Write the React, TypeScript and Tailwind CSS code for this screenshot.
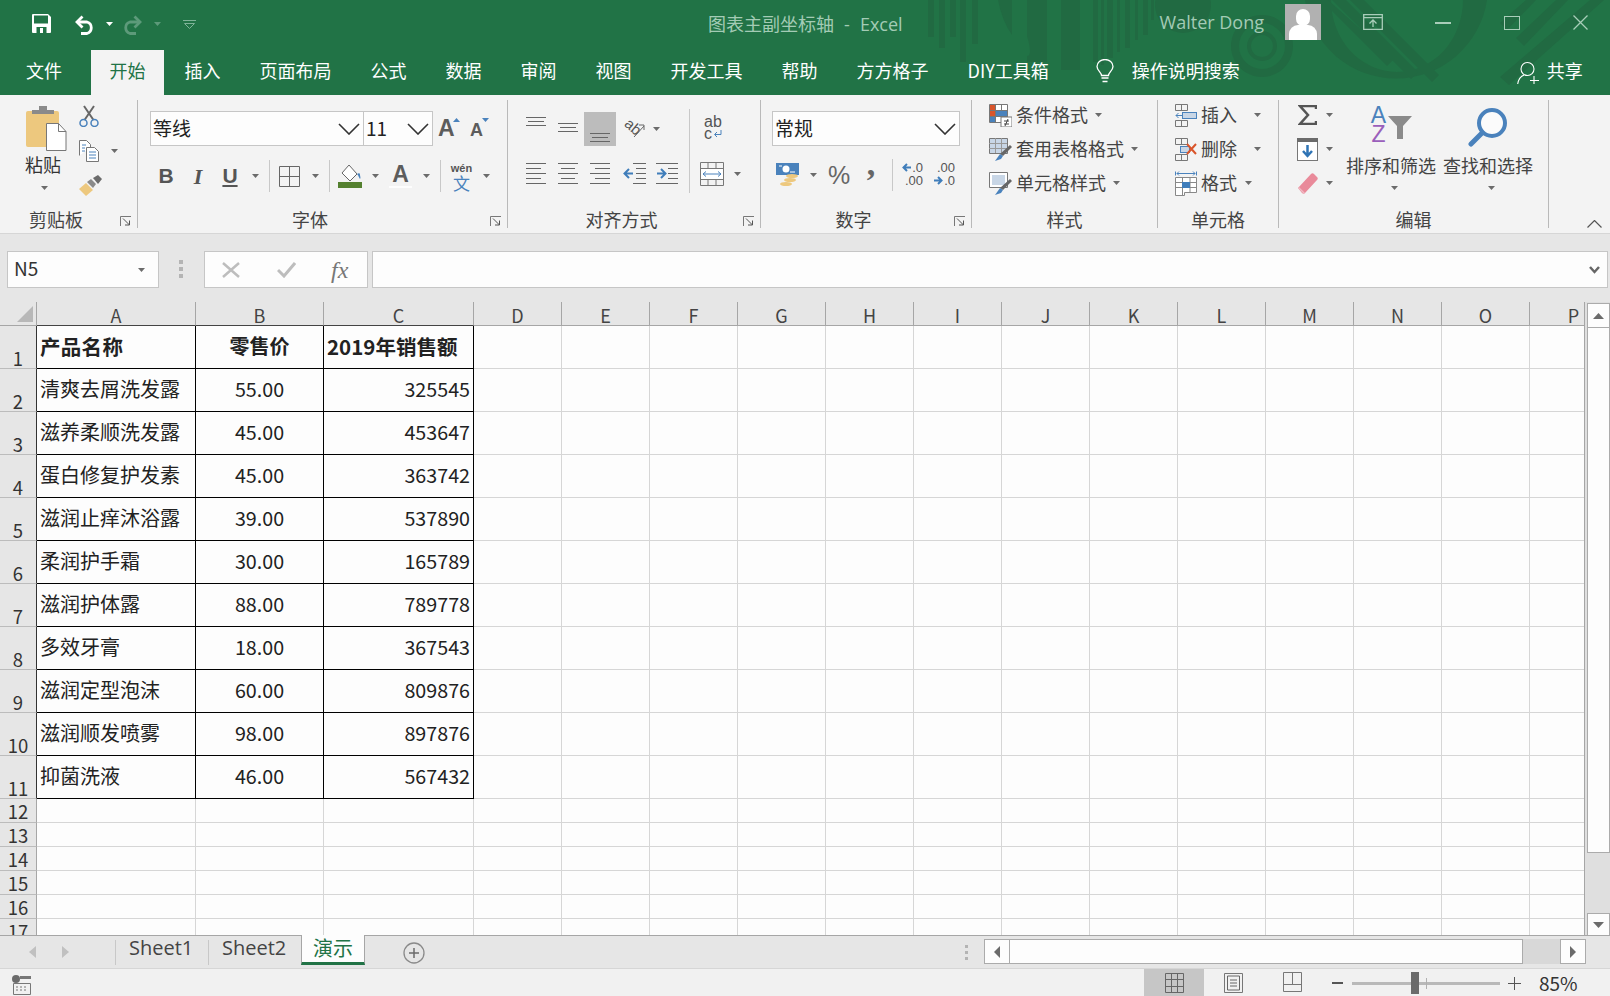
import React from "react";

const GREEN = "#217346";

const tabs = ["插入", "页面布局", "公式", "数据", "审阅", "视图", "开发工具", "帮助", "方方格子", "DIY工具箱"];
const letters = ["D", "E", "F", "G", "H", "I", "J", "K", "L", "M", "N", "O", "P"];
const rows = [
  ["清爽去屑洗发露", "55.00", "325545"],
  ["滋养柔顺洗发露", "45.00", "453647"],
  ["蛋白修复护发素", "45.00", "363742"],
  ["滋润止痒沐浴露", "39.00", "537890"],
  ["柔润护手霜", "30.00", "165789"],
  ["滋润护体露", "88.00", "789778"],
  ["多效牙膏", "18.00", "367543"],
  ["滋润定型泡沫", "60.00", "809876"],
  ["滋润顺发喷雾", "98.00", "897876"],
  ["抑菌洗液", "46.00", "567432"],
];

const Arrow = ({ className = "" }: { className?: string }) => (
  <svg width="7" height="4" viewBox="0 0 7 4" className={`shrink-0 ${className}`}>
    <path d="M0 0h7L3.5 4z" fill="#6b6b6b" />
  </svg>
);

const Chevron = ({ className = "" }: { className?: string }) => (
  <svg width="22" height="12" viewBox="0 0 22 12" className={`shrink-0 ${className}`}>
    <path d="M1 1l10 10L21 1" fill="none" stroke="#333" strokeWidth="1.6" />
  </svg>
);

const Sep = ({ className = "" }: { className?: string }) => <div className={`w-px bg-[#c8c8c8] shrink-0 ${className}`} />;

const Launcher = () => (
  <svg width="12" height="11" viewBox="0 0 12 11" className="absolute right-[5px] top-[6px]">
    <path d="M.5 10V.5H11" fill="none" stroke="#777" />
    <path d="M3 2.5l6.5 6.5M9.5 4.5V9H5" fill="none" stroke="#555" />
  </svg>
);

function Group({ className, label, launcher, children }: { className: string; label: string; launcher?: boolean; children: React.ReactNode }) {
  return (
    <div className={`${className} h-[128px] mt-[5px] shrink-0 border-r border-[#b9b9b9] flex flex-col`}>
      <div className="h-[112px]">{children}</div>
      <div className={`relative h-[18px] leading-[18px] text-center text-[18px] text-[#444] ${launcher ? "pr-[25px]" : ""}`}>
        {label}
        {launcher && <Launcher />}
      </div>
    </div>
  );
}

const Combo = ({ className, text }: { className: string; text: string }) => (
  <div className={`${className} h-[35px] shrink-0 bg-[#fdfdfd] border border-[#c6c6c6] flex items-center justify-between pl-[2px] pr-[3px] text-[19px] text-[#222]`}>
    <span>{text}</span>
    <Chevron />
  </div>
);

const Lines = ({ d, w = 20, h = 9, className = "" }: { d: string; w?: number; h?: number; className?: string }) => (
  <svg width={w} height={h} viewBox={`0 0 ${w} ${h}`} className={`shrink-0 ${className}`}>
    <path d={d} fill="none" stroke="#666" />
  </svg>
);

function TitleArt() {
  return (
    <svg width="1610" height="95" viewBox="0 0 1610 95" className="absolute left-0 top-0 pointer-events-none" aria-hidden>
      <defs>
        <clipPath id="ring">
          <circle cx="1397" cy="2" r="92" />
        </clipPath>
      </defs>
      <g fill="#216a42">
        <rect x="928" width="6" height="37" />
        <rect x="939" width="6" height="48" />
        <rect x="950" width="6" height="37" />
        <rect x="960" width="6" height="62" />
        <rect x="972" width="6" height="44" />
        <path d="M998 0h14v35q-10-14-14-35z" />
        <path d="M1027 0h20v62h-20v-6q6 0 0-20z" />
        <rect x="1061" width="19" height="70" />
        <rect x="1093" width="5" height="62" />
        <rect x="1101" width="3" height="65" />
        <rect x="1107" width="6" height="58" />
        <rect x="1117" width="3" height="52" />
        <rect x="1125" width="5" height="48" />
        <rect x="1135" width="3" height="40" />
        <rect x="1143" width="5" height="35" />
        <rect x="1151" width="3" height="20" />
        <circle cx="1183" cy="5" r="28" />
        <path fillRule="evenodd" d="M1262 15a31 31 0 1 0 .01 0zM1262 35a11 11 0 1 1-.01 0z" />
        <path fillRule="evenodd" d="M1305 0h182a92 92 0 0 1-182 0zM1331 0a66 72 0 0 0 132 0z" />
        <g clipPath="url(#ring)">
          <path d="M1321 0l66 66 7 -7L1328 0zM1332 0l79 79 7-7L1346 0zM1350 0l82 82 7-7L1364 0z" />
        </g>
        <path d="M1526 0h10l-29 30 -7-7zM1556 0h12l-44 46-8-8zM1590 0h14l-95 85-9-8z" />
      </g>
      <circle cx="1262" cy="46" r="19" fill="none" stroke={GREEN} strokeWidth="8" />
    </svg>
  );
}

function TitleBar() {
  return (
    <div className="relative h-[50px] flex items-start shrink-0">
      <svg width="19" height="19" viewBox="0 0 19 19" className="ml-[32px] mt-[14px] shrink-0">
        <path fill="#fff" d="M1 0h15l3 3v15a1 1 0 0 1-1 1H1a1 1 0 0 1-1-1V1a1 1 0 0 1 1-1z" />
        <rect x="2" y="1.500" width="14" height="8" fill={GREEN} />
        <rect x="4.500" y="13" width="10" height="6" fill={GREEN} />
        <rect x="8" y="14" width="3" height="5" fill="#fff" />
      </svg>
      <svg width="21" height="20" viewBox="0 0 21 20" className="ml-[23px] mt-[15px] shrink-0">
        <path d="M3 7h10a6 6 0 0 1 0 11.500H7" fill="none" stroke="#fff" strokeWidth="2.800" />
        <path d="M8.500 1.500L3 7l5.500 5.500" fill="none" stroke="#fff" strokeWidth="2.800" />
      </svg>
      <svg width="7" height="4" viewBox="0 0 7 4" className="ml-[11px] mt-[22px] shrink-0">
        <path d="M0 0h7L3.500 4z" fill="#fff" />
      </svg>
      <svg width="21" height="20" viewBox="0 0 21 20" className="ml-[9px] mt-[15px] shrink-0">
        <path d="M18 7H8a6 6 0 0 0 0 11.500h6" fill="none" stroke="#5d9a7a" strokeWidth="2.800" />
        <path d="M12.500 1.500L18 7l-5.500 5.500" fill="none" stroke="#5d9a7a" strokeWidth="2.800" />
      </svg>
      <svg width="7" height="4" viewBox="0 0 7 4" className="ml-[11px] mt-[22px] shrink-0">
        <path d="M0 0h7L3.500 4z" fill="#5d9a7a" />
      </svg>
      <svg width="13" height="9" viewBox="0 0 13 9" className="ml-[22px] mt-[20px] shrink-0">
        <path d="M0 .5h13M1.500 3.500h10L6.500 8.500z" fill="none" stroke="#7fb398" />
      </svg>
      <div className="relative ml-[512px] mt-[10px] leading-[27px] text-[18px] text-[#a3cbb5] whitespace-nowrap">
        图表主副坐标轴 <span className="font-['Open_Sans',sans-serif] ml-[6px] mr-[6px]">-</span> <span className="font-['Open_Sans',sans-serif]">Excel</span>
      </div>
      <div className="relative ml-[257px] mt-[9px] leading-[27px] text-[18px] text-[#a3cbb5] font-['Open_Sans',sans-serif] whitespace-nowrap w-[125px]">Walter Dong</div>
      <div className="relative w-[36px] h-[36px] mt-[4px] bg-[#b1b1b1] shrink-0 overflow-hidden">
        <div className="absolute left-[11px] top-[5px] w-[14px] h-[17px] rounded-full bg-white" />
        <div className="absolute left-[4px] top-[21px] w-[28px] h-[16px] rounded-t-[9px] bg-white" />
      </div>
      <svg width="20" height="16" viewBox="0 0 20 16" className="relative ml-[42px] mt-[14px] shrink-0">
        <path d="M.7 3.500V15.300h18.600V3.500M.7.7h18.600v3H.7z" fill="none" stroke="#a9cdb9" strokeWidth="1.300" />
        <path d="M10 13V6.500M6.500 9.500l3.500-3.500 3.500 3.500" fill="none" stroke="#a9cdb9" strokeWidth="1.300" />
      </svg>
      <div className="relative ml-[52px] mt-[22px] w-[16px] h-[1.500px] bg-[#a9cdb9] shrink-0" />
      <div className="relative ml-[53px] mt-[16px] w-[16px] h-[14px] border-[1.500px] border-[#a9cdb9] shrink-0" />
      <svg width="15" height="15" viewBox="0 0 15 15" className="relative ml-[53px] mt-[15px] shrink-0">
        <path d="M.5.500l14 14M14.500.500l-14 14" fill="none" stroke="#a9cdb9" strokeWidth="1.300" />
      </svg>
    </div>
  );
}

function TabBar() {
  return (
    <div className="relative h-[45px] flex shrink-0 text-[18px] leading-[41px] text-white">
      <div className="w-[89px] pl-[26px] pr-[27px] shrink-0">文件</div>
      <div className="w-[73px] ml-[2px] text-center bg-[#f3f3f3] text-[#217346] shrink-0">开始</div>
      {tabs.map((t) => (
        <div key={t} className="ml-[2px] px-[18.500px] shrink-0 whitespace-nowrap">
          {t}
        </div>
      ))}
      <svg width="18" height="24" viewBox="0 0 18 24" className="ml-[28.500px] mt-[9px] shrink-0">
        <path d="M5.500 16.500c0-3-4.500-5-4.500-9a8 7 0 0 1 16 0c0 4-4.500 6-4.500 9z" fill="none" stroke="#fff" strokeWidth="1.300" />
        <path d="M5.500 19h7M6.500 22.500h5" fill="none" stroke="#fff" strokeWidth="1.500" />
      </svg>
      <div className="ml-[18px] w-[108px] shrink-0 whitespace-nowrap">操作说明搜索</div>
      <svg width="23" height="24" viewBox="0 0 23 24" className="ml-[277px] mt-[11px] shrink-0">
        <circle cx="10.500" cy="8" r="6.500" fill="none" stroke="#fff" strokeWidth="1.100" />
        <path d="M.7 23c.8-5 3.500-8 6.500-9M15.500 16h0M17 15v8M13 19.500h9" fill="none" stroke="#fff" strokeWidth="1.100" />
      </svg>
      <div className="ml-[7px] shrink-0">共享</div>
    </div>
  );
}

function Clipboard() {
  return (
    <div className="flex">
      <div className="ml-[26px] mt-[6px] w-[42px] flex flex-col items-start">
        <svg width="42" height="45" viewBox="0 0 42 45" className="shrink-0">
          <rect x="0" y="5" width="33" height="36" rx="2" fill="#edc87e" />
          <path d="M6 8V4h7V0h8v4h7v4z" fill="#8a8a8a" />
          <path d="M20.500 17.500h12l7.500 8v19h-19.500z" fill="#fff" stroke="#777" />
          <path d="M32.500 17.500v8h7.500" fill="none" stroke="#777" />
        </svg>
        <div className="-ml-px mt-[2px] h-[22px] leading-[22px] text-[18px] whitespace-nowrap text-[#333]">粘贴</div>
        <Arrow className="ml-[15px] mt-[11px]" />
      </div>
      <div className="ml-[11px] mt-[5px] flex flex-col">
        <svg width="20" height="22" viewBox="0 0 20 22" className="shrink-0">
          <path d="M5 1l9.500 14M15 1L5.500 15" fill="none" stroke="#666" strokeWidth="2" />
          <circle cx="4.500" cy="18" r="3.500" fill="none" stroke="#4a82bc" strokeWidth="1.500" />
          <circle cx="15.500" cy="18" r="3.500" fill="none" stroke="#4a82bc" strokeWidth="1.500" />
        </svg>
        <div className="flex items-center mt-[13px]">
          <svg width="20" height="22" viewBox="0 0 20 22" className="shrink-0">
            <path d="M.5 15.500V.5h7l4 4v3" fill="#fff" stroke="#777" />
            <path d="M7.500 21.500V7.500h8l4 4v10z" fill="#fff" stroke="#777" />
            <path d="M3 5h4M3 8h3M3 11h3M10 12h7M10 15h7M10 18h7" stroke="#4a82bc" />
          </svg>
          <Arrow className="ml-[12px]" />
        </div>
        <svg width="23" height="21" viewBox="0 0 23 21" className="mt-[13px] shrink-0">
          <path d="M0 14l7-6 7 7-7 6z" fill="#edc87e" />
          <path d="M8 7l4-3 5 5-3 4z" fill="#8a8a8a" />
          <path d="M14 3l5-3 4 4-4 5z" fill="#6b6b6b" />
        </svg>
      </div>
    </div>
  );
}

function FontGroup() {
  return (
    <div className="pl-[12px] pt-[11px]">
      <div className="flex items-start">
        <Combo className="w-[214px]" text="等线" />
        <Combo className="w-[70px] -ml-px" text="11" />
        <div className="relative ml-[5px] w-[20px] h-[35px] text-[23px] leading-[30px] mt-[2px] font-['Liberation_Sans',sans-serif] font-bold text-[#5c5c5c]">
          A
          <svg width="7" height="4" viewBox="0 0 7 4" className="absolute left-[15px] top-[5px]">
            <path d="M0 4h7L3.500 0z" fill="#4a82bc" />
          </svg>
        </div>
        <div className="relative ml-[12px] w-[16px] h-[35px] text-[18px] leading-[34px] mt-[2px] font-['Liberation_Sans',sans-serif] font-bold text-[#5c5c5c]">
          A
          <svg width="7" height="4" viewBox="0 0 7 4" className="absolute left-[12px] top-[5px]">
            <path d="M0 0h7L3.500 4z" fill="#4a82bc" />
          </svg>
        </div>
      </div>
      <div className="mt-[14px] h-[28px] flex items-center font-['Liberation_Sans',sans-serif] text-[#555]">
        <span className="ml-[8px] w-[16px] text-center text-[21px] font-bold">B</span>
        <span className="ml-[16px] w-[16px] text-center text-[22px] font-bold italic font-['Liberation_Serif',serif]">I</span>
        <span className="ml-[15px] w-[18px] text-center text-[21px] font-bold underline underline-offset-2">U</span>
        <Arrow className="ml-[13px]" />
        <Sep className="ml-[10px] h-[32px]" />
        <svg width="21" height="21" viewBox="0 0 21 21" className="ml-[9px] shrink-0">
          <path d="M.5.500h20v20H.5zM10.500 0v21M0 10.500h21" fill="none" stroke="#666" />
        </svg>
        <Arrow className="ml-[12px]" />
        <Sep className="ml-[10px] h-[32px]" />
        <svg width="24" height="24" viewBox="0 0 24 24" className="ml-[8px] shrink-0">
          <path d="M11 1l8 9-7 7-8-8z" fill="#fff" stroke="#666" />
          <path d="M19 10c2-1 3-1 3 1 0 1 1 3 0 4-1-1-1-3-3-5z" fill="#4a82bc" />
          <rect x="0" y="18" width="24" height="6" fill="#54802f" />
        </svg>
        <Arrow className="ml-[10px]" />
        <div className="ml-[10px] w-[23px] h-[24px] flex flex-col items-center">
          <span className="text-[23px] leading-[20px] font-bold text-[#5c5c5c]">A</span>
          <div className="mt-[2px] w-[23px] h-[4px] bg-[#fdfdfd]" />
        </div>
        <Arrow className="ml-[11px]" />
        <Sep className="ml-[10px] h-[32px]" />
        <div className="ml-[10px] w-[21px] flex flex-col items-center">
          <span className="text-[11px] leading-[11px] font-bold text-[#555]">wén</span>
          <span className="text-[17px] leading-[15px] mt-[1px] text-[#4a82bc] font-['Noto_Sans_CJK_SC',sans-serif]">文</span>
        </div>
        <Arrow className="ml-[11px]" />
      </div>
    </div>
  );
}

function AlignGroup() {
  return (
    <div className="flex">
      <div className="w-[181px] pt-[12px]">
        <div className="h-[34px] flex">
          <Lines className="ml-[18px] mt-[5px]" d="M0 .5h20M2 4.500h16M0 8.500h20" />
          <Lines className="ml-[12px] mt-[11px]" d="M0 .5h20M2 4.500h16M0 8.500h20" />
          <div className="ml-[6px] w-[32px] h-[34px] bg-[#bcbcbc] flex items-end justify-center pb-[4px] shrink-0">
            <Lines d="M0 .5h20M2 4.500h16M0 8.500h20" />
          </div>
          <div className="ml-[9px] mt-[8px] w-[20px] h-[17px] relative text-[15px] leading-[17px] text-[#555] font-['Liberation_Sans',sans-serif]">
            <span className="absolute left-0 top-[-2px] rotate-[40deg]">ab</span>
            <svg width="20" height="17" viewBox="0 0 20 17" className="absolute left-0 top-0">
              <path d="M9 17L19 6M14 5h5v5" fill="none" stroke="#666" />
            </svg>
          </div>
          <Arrow className="ml-[8px] mt-[15px]" />
        </div>
        <div className="mt-[16px] flex items-start">
          <Lines className="ml-[18px]" h={22} d="M0 1.500h20M0 6.500h15M0 11.500h20M0 16.500h15M0 21.500h20" />
          <Lines className="ml-[12px]" h={22} d="M0 1.500h20M3 6.500h14M0 11.500h20M3 16.500h14M0 21.500h20" />
          <Lines className="ml-[12px]" h={22} d="M0 1.500h20M5 6.500h15M0 11.500h20M5 16.500h15M0 21.500h20" />
          <svg width="23" height="22" viewBox="0 0 23 22" className="ml-[13px] shrink-0">
            <path d="M10 1.500h13M13 6.500h10M13 11.500h10M13 16.500h10M10 21.500h13" stroke="#666" fill="none" />
            <path d="M10 11.500H2M6 7l-4.500 4.500L6 16" stroke="#3f7dba" strokeWidth="2" fill="none" />
          </svg>
          <svg width="22" height="22" viewBox="0 0 22 22" className="ml-[10px] shrink-0">
            <path d="M0 1.500h22M12 6.500h10M12 11.500h10M12 16.500h10M0 21.500h22" stroke="#666" fill="none" />
            <path d="M1 11.500h8M5 7l4.500 4.500L5 16" stroke="#3f7dba" strokeWidth="2" fill="none" />
          </svg>
        </div>
      </div>
      <Sep className="mt-[9px] h-[84px]" />
      <div className="pt-[16px]">
        <div className="ml-[14px] w-[20px] flex flex-col text-[#555] font-['Liberation_Sans',sans-serif] text-[16px] leading-[12px]">
          <span>ab</span>
          <span className="flex items-center">
            c
            <svg width="9" height="8" viewBox="0 0 9 8" className="ml-[1px]">
              <path d="M8 0v4.500H2M4 2L1.500 4.500 4 7" fill="none" stroke="#4a82bc" />
            </svg>
          </span>
        </div>
        <div className="ml-[10px] mt-[22px] flex items-center">
          <svg width="24" height="24" viewBox="0 0 24 24" className="shrink-0">
            <path d="M.5.500h23v23H.5zM0 6.500h24M0 17.500h24M8 0v6.500M16 0v6.500M8 17.500V24M16 17.500V24" fill="none" stroke="#777" />
            <rect x="1" y="7" width="22" height="10" fill="#fff" />
            <path d="M3 12h18M6 9.500L3 12l3 2.500M18 9.500l3 2.500-3 2.500" fill="none" stroke="#4a82bc" />
          </svg>
          <Arrow className="ml-[10px]" />
        </div>
      </div>
    </div>
  );
}

function NumberGroup() {
  return (
    <div className="pl-[11px] pt-[11px]">
      <Combo className="w-[188px]" text="常规" />
      <div className="mt-[16px] flex items-center h-[26px] font-['Liberation_Sans',sans-serif] text-[#555]">
        <svg width="23" height="24" viewBox="0 0 23 24" className="ml-[4px] shrink-0">
          <rect x="0" y="0" width="23" height="12" fill="#4a82bc" />
          <circle cx="10" cy="6" r="3.500" fill="#fff" />
          <path d="M3 3h3M14 9h5" stroke="#fff" />
          <ellipse cx="16" cy="13" rx="6" ry="2" fill="#edc87e" />
          <ellipse cx="14" cy="17" rx="6" ry="2" fill="#edc87e" />
          <ellipse cx="10" cy="21" rx="6" ry="2" fill="#edc87e" />
        </svg>
        <Arrow className="ml-[11px]" />
        <span className="ml-[11px] w-[22px] text-center text-[25px] leading-[26px] text-[#666]">%</span>
        <span className="ml-[16px] w-[10px] text-center text-[34px] leading-[24px] font-bold font-['Liberation_Serif',serif] text-[#666] -mt-[22px]">,</span>
        <Sep className="ml-[16px] h-[32px]" />
        <div className="ml-[8px] w-[22px] flex flex-col items-end text-[13px] leading-[13px] -mt-[2px]">
          <span className="flex items-center">
            <svg width="9" height="9" viewBox="0 0 9 9" className="mr-[1px]">
              <path d="M9 4.500H2M5 1L1.500 4.500 5 8" fill="none" stroke="#3f7dba" strokeWidth="2" />
            </svg>
            .0
          </span>
          <span>.00</span>
        </div>
        <div className="ml-[10px] w-[22px] flex flex-col items-end text-[13px] leading-[13px] -mt-[2px]">
          <span>.00</span>
          <span className="flex items-center">
            <svg width="9" height="9" viewBox="0 0 9 9" className="mr-[1px]">
              <path d="M0 4.500h7M4 1l3.500 3.500L4 8" fill="none" stroke="#3f7dba" strokeWidth="2" />
            </svg>
            .0
          </span>
        </div>
      </div>
    </div>
  );
}

const StyleRow = ({ icon, text, arrow }: { icon: React.ReactNode; text: string; arrow: string }) => (
  <div className="h-[30px] flex items-center text-[18px] text-[#444] whitespace-nowrap">
    {icon}
    <span className="ml-[4px] -mt-[2px]">{text}</span>
    <Arrow className={arrow} />
  </div>
);

function StylesGroup() {
  return (
    <div className="pl-[17px] flex flex-col gap-[4px]">
      <StyleRow
        arrow="ml-[7px]"
        text="条件格式"
        icon={
          <svg width="23" height="23" viewBox="0 0 23 23" className="shrink-0">
            <path d="M.5.500h18v18H.5zM0 6.500h18M0 12.500h18M6.500 0v18M12.500 0v18" fill="#fff" stroke="#777" />
            <rect x="1" y="1" width="5" height="5" fill="#d9552b" />
            <rect x="1" y="7" width="5" height="5" fill="#d9552b" />
            <rect x="7" y="7" width="11" height="5" fill="#4a82bc" />
            <rect x="1" y="13" width="5" height="5" fill="#4a82bc" />
            <rect x="12" y="13" width="11" height="10" fill="#fff" stroke="#777" />
            <path d="M15 17h5M15 20h5M19 15l-3 7" stroke="#444" />
          </svg>
        }
      />
      <StyleRow
        arrow="ml-[7px]"
        text="套用表格格式"
        icon={
          <svg width="23" height="23" viewBox="0 0 23 23" className="shrink-0">
            <path d="M.5.500h18v15H.5z" fill="#c8d6e6" stroke="#777" />
            <path d="M0 5.500h18M0 10.500h18M6.500 0v15M12.500 0v15" stroke="#999" />
            <path d="M21 7l2 2-9 9-3-2z" fill="#666" />
            <path d="M11 16l3 2-2 3-6 2z" fill="#4a82bc" />
          </svg>
        }
      />
      <StyleRow
        arrow="ml-[7px]"
        text="单元格样式"
        icon={
          <svg width="23" height="23" viewBox="0 0 23 23" className="shrink-0">
            <path d="M.5.500h18v15H.5z" fill="#fff" stroke="#777" />
            <rect x="3" y="3" width="13" height="10" fill="#c8d6e6" />
            <path d="M21 7l2 2-9 9-3-2z" fill="#666" />
            <path d="M11 16l3 2-2 3-6 2z" fill="#4a82bc" />
          </svg>
        }
      />
    </div>
  );
}

const CellRow = ({ icon, text, arrow }: { icon: React.ReactNode; text: string; arrow: string }) => (
  <div className="h-[30px] flex items-center text-[18px] text-[#444] whitespace-nowrap">
    {icon}
    <span className="ml-[4px] -mt-[2px]">{text}</span>
    <Arrow className={arrow} />
  </div>
);

function CellsGroup() {
  return (
    <div className="pl-[17px] flex flex-col gap-[4px]">
      <CellRow
        arrow="ml-[17px]"
        text="插入"
        icon={
          <svg width="22" height="23" viewBox="0 0 22 23" className="shrink-0">
            <path d="M.5.500h12v6H.5zM.5 16.500h12v6H.5zM6.500 16v7M6.500 0v6" fill="none" stroke="#777" />
            <rect x="7.500" y="8.500" width="14" height="6" fill="#c8d6e6" stroke="#4a82bc" />
            <path d="M7 11.500H1M3.500 9L1 11.500 3.500 14" fill="none" stroke="#4a82bc" />
          </svg>
        }
      />
      <CellRow
        arrow="ml-[17px]"
        text="删除"
        icon={
          <svg width="22" height="23" viewBox="0 0 22 23" className="shrink-0">
            <path d="M.5.500h12v6H.5zM.5 16.500h12v6H.5zM6.500 16v7M6.500 0v6" fill="none" stroke="#777" />
            <rect x="5.500" y="8.500" width="9" height="6" fill="#c8d6e6" stroke="#4a82bc" />
            <path d="M12 6l9 10M21 6l-9 10" stroke="#d9552b" strokeWidth="2" />
          </svg>
        }
      />
      <CellRow
        arrow="ml-[8px]"
        text="格式"
        icon={
          <svg width="22" height="25" viewBox="0 0 22 25" className="shrink-0">
            <path d="M.5.500v4M21.500.500v4M2 2.500h18M2 2.500l2-2M2 2.500l2 2M20 2.500l-2-2M20 2.500l-2 2" fill="none" stroke="#4a82bc" />
            <path d="M.5 6.500h21v15h-12v3h-9zM0 11.500h22M0 16.500h22M7.500 6v18M15 6v15" fill="#fff" stroke="#888" />
            <rect x="7" y="11" width="8" height="6" fill="#3f7dba" />
          </svg>
        }
      />
    </div>
  );
}

const EditArrow = ({ icon }: { icon: React.ReactNode }) => (
  <div className="h-[30px] flex items-center">
    <div className="w-[21px] flex justify-center">{icon}</div>
    <Arrow className="ml-[8px]" />
  </div>
);

function EditGroup() {
  return (
    <div className="flex">
      <div className="pl-[18px] flex flex-col gap-[4px] w-[67px] shrink-0">
        <EditArrow
          icon={
            <svg width="19" height="20" viewBox="0 0 19 20" className="shrink-0">
              <path d="M18 4V1H2l8 9-8 9h16v-3" fill="none" stroke="#555" strokeWidth="2.500" />
            </svg>
          }
        />
        <EditArrow
          icon={
            <svg width="21" height="23" viewBox="0 0 21 23" className="shrink-0">
              <rect x=".5" y=".5" width="20" height="22" fill="#fff" stroke="#777" />
              <rect x="0" y="0" width="21" height="4" fill="#6b6b6b" />
              <path d="M10.500 7v10M6 13l4.500 5 4.500-5" fill="none" stroke="#2f74b5" strokeWidth="2.500" />
            </svg>
          }
        />
        <EditArrow
          icon={
            <svg width="20" height="21" viewBox="0 0 20 21" className="shrink-0">
              <path d="M0 15L13 1c1-1 2-1 3 0l3 3c1 1 1 2 0 3L7 20c-1 1-2 1-3 0z" fill="#e98a9a" />
              <path d="M0 15l6 6 1-1-6-6z" fill="#f2b9c3" />
            </svg>
          }
        />
      </div>
      <div className="w-[90px] pt-[6px] flex flex-col items-center shrink-0">
        <div className="h-[38px] w-[42px] flex">
          <div className="w-[18px] flex flex-col items-center font-['Liberation_Sans',sans-serif] text-[23px] leading-[19px]">
            <span className="text-[#4a82bc]">A</span>
            <span className="text-[#9a5fbb]">Z</span>
          </div>
          <svg width="24" height="24" viewBox="0 0 24 24" className="ml-[1px] mt-[10px] shrink-0">
            <path d="M0 0h24l-9 10v13H9V10z" fill="#8a8a8a" />
          </svg>
        </div>
        <div className="mt-[10px] h-[22px] leading-[22px] text-[18px] whitespace-nowrap text-[#444]">排序和筛选</div>
        <Arrow className="mt-[10px] ml-[6px]" />
      </div>
      <div className="w-[90px] ml-[7px] pt-[7px] flex flex-col items-center shrink-0">
        <svg width="40" height="40" viewBox="0 0 40 40" className="shrink-0">
          <circle cx="24" cy="16" r="13" fill="#fbfbfb" stroke="#4a82bc" strokeWidth="4" />
          <path d="M14 26L3 37" stroke="#4a82bc" strokeWidth="5" strokeLinecap="round" />
        </svg>
        <div className="mt-[7px] h-[22px] leading-[22px] text-[18px] whitespace-nowrap text-[#444]">查找和选择</div>
        <Arrow className="mt-[10px] ml-[6px]" />
      </div>
    </div>
  );
}

function Ribbon() {
  return (
    <div className="h-[139px] shrink-0 bg-[#f3f3f3] border-b border-[#d6d6d6] flex">
      <Group className="w-[138px]" label="剪贴板" launcher>
        <Clipboard />
      </Group>
      <Group className="w-[370px]" label="字体" launcher>
        <FontGroup />
      </Group>
      <Group className="w-[253px]" label="对齐方式" launcher>
        <AlignGroup />
      </Group>
      <Group className="w-[211px]" label="数字" launcher>
        <NumberGroup />
      </Group>
      <Group className="w-[186px]" label="样式">
        <StylesGroup />
      </Group>
      <Group className="w-[121px]" label="单元格">
        <CellsGroup />
      </Group>
      <Group className="w-[270px]" label="编辑">
        <EditGroup />
      </Group>
      <svg width="15" height="8" viewBox="0 0 15 8" className="ml-[38px] mt-[125px] shrink-0">
        <path d="M.5 7.500l7-7 7 7" fill="none" stroke="#555" strokeWidth="1.200" />
      </svg>
    </div>
  );
}

function FormulaBar() {
  return (
    <div className="h-[68px] shrink-0 bg-[#e6e6e6] pt-[17px] flex items-start">
      <div className="ml-[7px] w-[152px] h-[37px] bg-[#fdfdfd] border border-[#c6c6c6] flex items-center justify-between pl-[6px] pr-[13px] text-[19px] text-[#333]">
        <span className="-mt-[2px]">N5</span>
        <Arrow />
      </div>
      <div className="ml-[20px] mt-[9px] w-[4px] flex flex-col gap-[3px] shrink-0">
        <div className="h-[4px] bg-[#b4b4b4]" />
        <div className="h-[4px] bg-[#b4b4b4]" />
        <div className="h-[4px] bg-[#b4b4b4]" />
      </div>
      <div className="ml-[21px] w-[164px] h-[37px] bg-[#fdfdfd] border border-[#c6c6c6] flex items-center shrink-0">
        <svg width="18" height="16" viewBox="0 0 18 16" className="ml-[17px] shrink-0">
          <path d="M1 1l16 14M17 1L1 15" fill="none" stroke="#bdbdbd" strokeWidth="2.500" />
        </svg>
        <svg width="19" height="16" viewBox="0 0 19 16" className="ml-[37px] shrink-0">
          <path d="M1 8l6 6L18 1" fill="none" stroke="#bdbdbd" strokeWidth="3" />
        </svg>
        <span className="ml-[35px] font-['Liberation_Serif',serif] italic text-[24px] leading-none text-[#777]">fx</span>
      </div>
      <div className="ml-[4px] w-[1236px] h-[37px] bg-[#fdfdfd] border border-[#c6c6c6] flex items-center justify-end pr-[7px] shrink-0">
        <svg width="11" height="8" viewBox="0 0 11 8">
          <path d="M1 1l4.500 5L10 1" fill="none" stroke="#666" strokeWidth="2.500" />
        </svg>
      </div>
    </div>
  );
}

const headCell = "bg-[#e6e6e6] border-r border-b text-[18px] leading-[20px] text-[#444] flex items-end justify-center";
const blank = "bg-[#fdfdfd] border-r border-b border-[#d6d6d6]";
const data = "bg-[#fdfdfd] border-r border-b border-black flex items-center pb-[2px] text-[19.700px] text-[#222] whitespace-nowrap";

function Sheet() {
  const cols = Array.from({ length: 13 });
  return (
    <div className="w-[1584px] overflow-hidden shrink-0">
      <div className="w-[1618px] grid grid-cols-[37px_159px_128px_150px_repeat(13,88px)] grid-rows-[24px_repeat(11,43px)_repeat(6,24px)]">
        <div className="bg-[#e6e6e6] border-r border-b border-[#a6a6a6] flex items-end justify-end pr-[3px] pb-[3px]">
          <svg width="16" height="16" viewBox="0 0 16 16">
            <path d="M16 0v16H0z" fill="#b8b8b8" />
          </svg>
        </div>
        <div className={`${headCell} border-r-[#a6a6a6] border-b-[#444]`}>A</div>
        <div className={`${headCell} border-r-[#a6a6a6] border-b-[#444]`}>B</div>
        <div className={`${headCell} border-r-[#a6a6a6] border-b-[#444]`}>C</div>
        {letters.map((l) => (
          <div key={l} className={`${headCell} border-r-[#a6a6a6] border-b-[#a6a6a6]`}>
            {l}
          </div>
        ))}

        <div className="bg-[#e6e6e6] border-r border-b border-r-[#333] border-b-[#bcbcbc] flex items-end justify-center text-[18.500px] leading-[20px] text-[#333]">1</div>
        <div className={`${data} pl-[3px] text-[20.500px] font-bold tracking-[0.3px]`}>产品名称</div>
        <div className={`${data} justify-center text-[20px] font-bold`}>零售价</div>
        <div className={`${data} pl-[3px] text-[20.500px] font-bold`}>2019年销售额</div>
        {cols.map((_, i) => (
          <div key={i} className={blank} />
        ))}

        {rows.map((r, idx) => (
          <React.Fragment key={r[0]}>
            <div className="bg-[#e6e6e6] border-r border-b border-r-[#333] border-b-[#bcbcbc] flex items-end justify-center text-[18.500px] leading-[20px] text-[#333]">{idx + 2}</div>
            <div className={`${data} pl-[3px] text-[20px]`}>{r[0]}</div>
            <div className={`${data} justify-center`}>{r[1]}</div>
            <div className={`${data} justify-end pr-[3px]`}>{r[2]}</div>
            {cols.map((_, i) => (
              <div key={i} className={blank} />
            ))}
          </React.Fragment>
        ))}

        {[12, 13, 14, 15, 16, 17].map((n) => (
          <React.Fragment key={n}>
            <div className="bg-[#e6e6e6] border-r border-b border-r-[#a6a6a6] border-b-[#bcbcbc] flex items-end justify-center text-[18.500px] leading-[21px] text-[#333]">{n}</div>
            {[...Array(16)].map((_, i) => (
              <div key={i} className={blank} />
            ))}
          </React.Fragment>
        ))}
      </div>
    </div>
  );
}

function VScroll() {
  return (
    <div className="w-[26px] border-l border-[#a6a6a6] bg-[#dfdfdf] pl-[2px] flex flex-col shrink-0">
      <div className="mt-px h-[25px] bg-[#fdfdfd] border border-[#ababab] flex items-center justify-center shrink-0">
        <svg width="11" height="6" viewBox="0 0 11 6">
          <path d="M0 6h11L5.500 0z" fill="#6b6b6b" />
        </svg>
      </div>
      <div className="-mt-px h-[526px] bg-[#fdfdfd] border border-[#ababab] shrink-0" />
      <div className="mt-[60px] h-[24px] bg-[#fdfdfd] border border-[#ababab] flex items-center justify-center shrink-0">
        <svg width="11" height="6" viewBox="0 0 11 6">
          <path d="M0 0h11L5.500 6z" fill="#6b6b6b" />
        </svg>
      </div>
    </div>
  );
}

function SheetTabs() {
  return (
    <div className="h-[33px] shrink-0 bg-[#e6e6e6] border-t border-[#a6a6a6] flex items-start text-[#444] font-['Open_Sans','Noto_Sans_CJK_SC',sans-serif]">
      <svg width="7" height="12" viewBox="0 0 7 12" className="ml-[29px] mt-[10px] shrink-0">
        <path d="M7 0v12L0 6z" fill="#c0c0c0" />
      </svg>
      <svg width="7" height="12" viewBox="0 0 7 12" className="ml-[26px] mt-[10px] shrink-0">
        <path d="M0 0v12l7-6z" fill="#c0c0c0" />
      </svg>
      <Sep className="ml-[46px] mt-[4px] h-[25px] bg-[#9a9a9a]" />
      <span className="ml-[13px] w-[79px] text-[20px] leading-[24px] shrink-0">Sheet1</span>
      <Sep className="mt-[4px] h-[25px] bg-[#9a9a9a]" />
      <span className="ml-[13px] w-[79px] text-[20px] leading-[24px] shrink-0">Sheet2</span>
      <div className="w-[64px] h-[30px] bg-[#fdfdfd] border-x border-[#a6a6a6] border-b-[3px] border-b-[#217346] text-center text-[20px] leading-[26px] text-[#217346] shrink-0 -mt-px font-['Noto_Sans_CJK_SC',sans-serif]">
        演示
      </div>
      <svg width="22" height="22" viewBox="0 0 22 22" className="ml-[38px] mt-[6px] shrink-0">
        <circle cx="11" cy="11" r="10" fill="none" stroke="#8a8a8a" strokeWidth="1.300" />
        <path d="M11 6v10M6 11h10" stroke="#6b6b6b" strokeWidth="1.500" />
      </svg>
      <div className="ml-[540px] mt-[9px] w-[3px] flex flex-col gap-[3px] shrink-0">
        <div className="h-[3px] bg-[#b4b4b4]" />
        <div className="h-[3px] bg-[#b4b4b4]" />
        <div className="h-[3px] bg-[#b4b4b4]" />
      </div>
      <div className="ml-[16px] mt-[3px] w-[602px] h-[25px] flex bg-[#d8d8d8] shrink-0">
        <div className="w-[26px] bg-[#fdfdfd] border border-[#ababab] flex items-center justify-center shrink-0">
          <svg width="6" height="12" viewBox="0 0 6 12">
            <path d="M6 0v12L0 6z" fill="#6b6b6b" />
          </svg>
        </div>
        <div className="w-[514px] -ml-px bg-[#fdfdfd] border border-[#ababab] shrink-0" />
        <div className="ml-auto w-[26px] bg-[#fdfdfd] border border-[#ababab] flex items-center justify-center shrink-0">
          <svg width="6" height="12" viewBox="0 0 6 12">
            <path d="M0 0v12l6-6z" fill="#6b6b6b" />
          </svg>
        </div>
      </div>
    </div>
  );
}

function StatusBar() {
  return (
    <div className="h-[28px] shrink-0 bg-[#f1f1f1] border-t border-[#d6d6d6] flex items-start">
      <svg width="20" height="20" viewBox="0 0 20 20" className="ml-[11px] mt-[6px] shrink-0">
        <circle cx="5" cy="4" r="4" fill="#6b6b6b" />
        <rect x="9" y="1" width="11" height="3" fill="#777" />
        <path d="M2.500 8.500h17v11h-17zM5 12h2M9 12h2M13 12h2M5 15h2M9 15h2M13 15h2" fill="none" stroke="#777" />
      </svg>
      <div className="ml-[1113px] w-[60px] h-[27px] bg-[#c6c6c6] flex items-center justify-center shrink-0">
        <svg width="19" height="20" viewBox="0 0 19 20">
          <path d="M.5.500h18v19H.5zM6.500 0v20M12.500 0v20M0 6.500h19M0 13.500h19" fill="none" stroke="#666" />
        </svg>
      </div>
      <svg width="19" height="20" viewBox="0 0 19 20" className="ml-[20px] mt-[4px] shrink-0">
        <path d="M.5.500h18v19H.5z" fill="none" stroke="#777" />
        <path d="M3.500 3h12v14h-12zM6 7h7M6 10h7M6 13h7" fill="none" stroke="#666" />
      </svg>
      <svg width="19" height="20" viewBox="0 0 19 20" className="ml-[40px] mt-[3px] shrink-0">
        <path d="M.5.500h18v19H.5zM.5 12.500h18M9.500 0v13" fill="none" stroke="#777" />
      </svg>
      <div className="ml-[30px] mt-[13px] w-[11px] h-[2px] bg-[#555] shrink-0" />
      <div className="relative ml-[9px] mt-[13px] w-[148px] h-[3px] bg-[#b9b9b9] shrink-0">
        <div className="absolute left-[74px] top-[-4px] w-px h-[11px] bg-[#b0b0b0]" />
        <div className="absolute left-[59px] top-[-10px] w-[8px] h-[22px] bg-[#6b6b6b]" />
      </div>
      <svg width="13" height="13" viewBox="0 0 13 13" className="ml-[8px] mt-[8px] shrink-0">
        <path d="M6.500 0v13M0 6.500h13" stroke="#555" />
      </svg>
      <span className="ml-[18px] text-[19px] leading-[27px] text-[#333] whitespace-nowrap">85%</span>
    </div>
  );
}

export default function App() {
  return (
    <div className="relative w-[1610px] h-[996px] overflow-hidden flex flex-col bg-[#e6e6e6] font-['Noto_Sans_CJK_SC',sans-serif]">
      <div className="relative h-[95px] shrink-0 bg-[#217346] flex flex-col">
        <TitleArt />
        <TitleBar />
        <TabBar />
      </div>
      <Ribbon />
      <FormulaBar />
      <div className="h-[633px] flex shrink-0 overflow-hidden">
        <Sheet />
        <VScroll />
      </div>
      <SheetTabs />
      <StatusBar />
    </div>
  );
}
